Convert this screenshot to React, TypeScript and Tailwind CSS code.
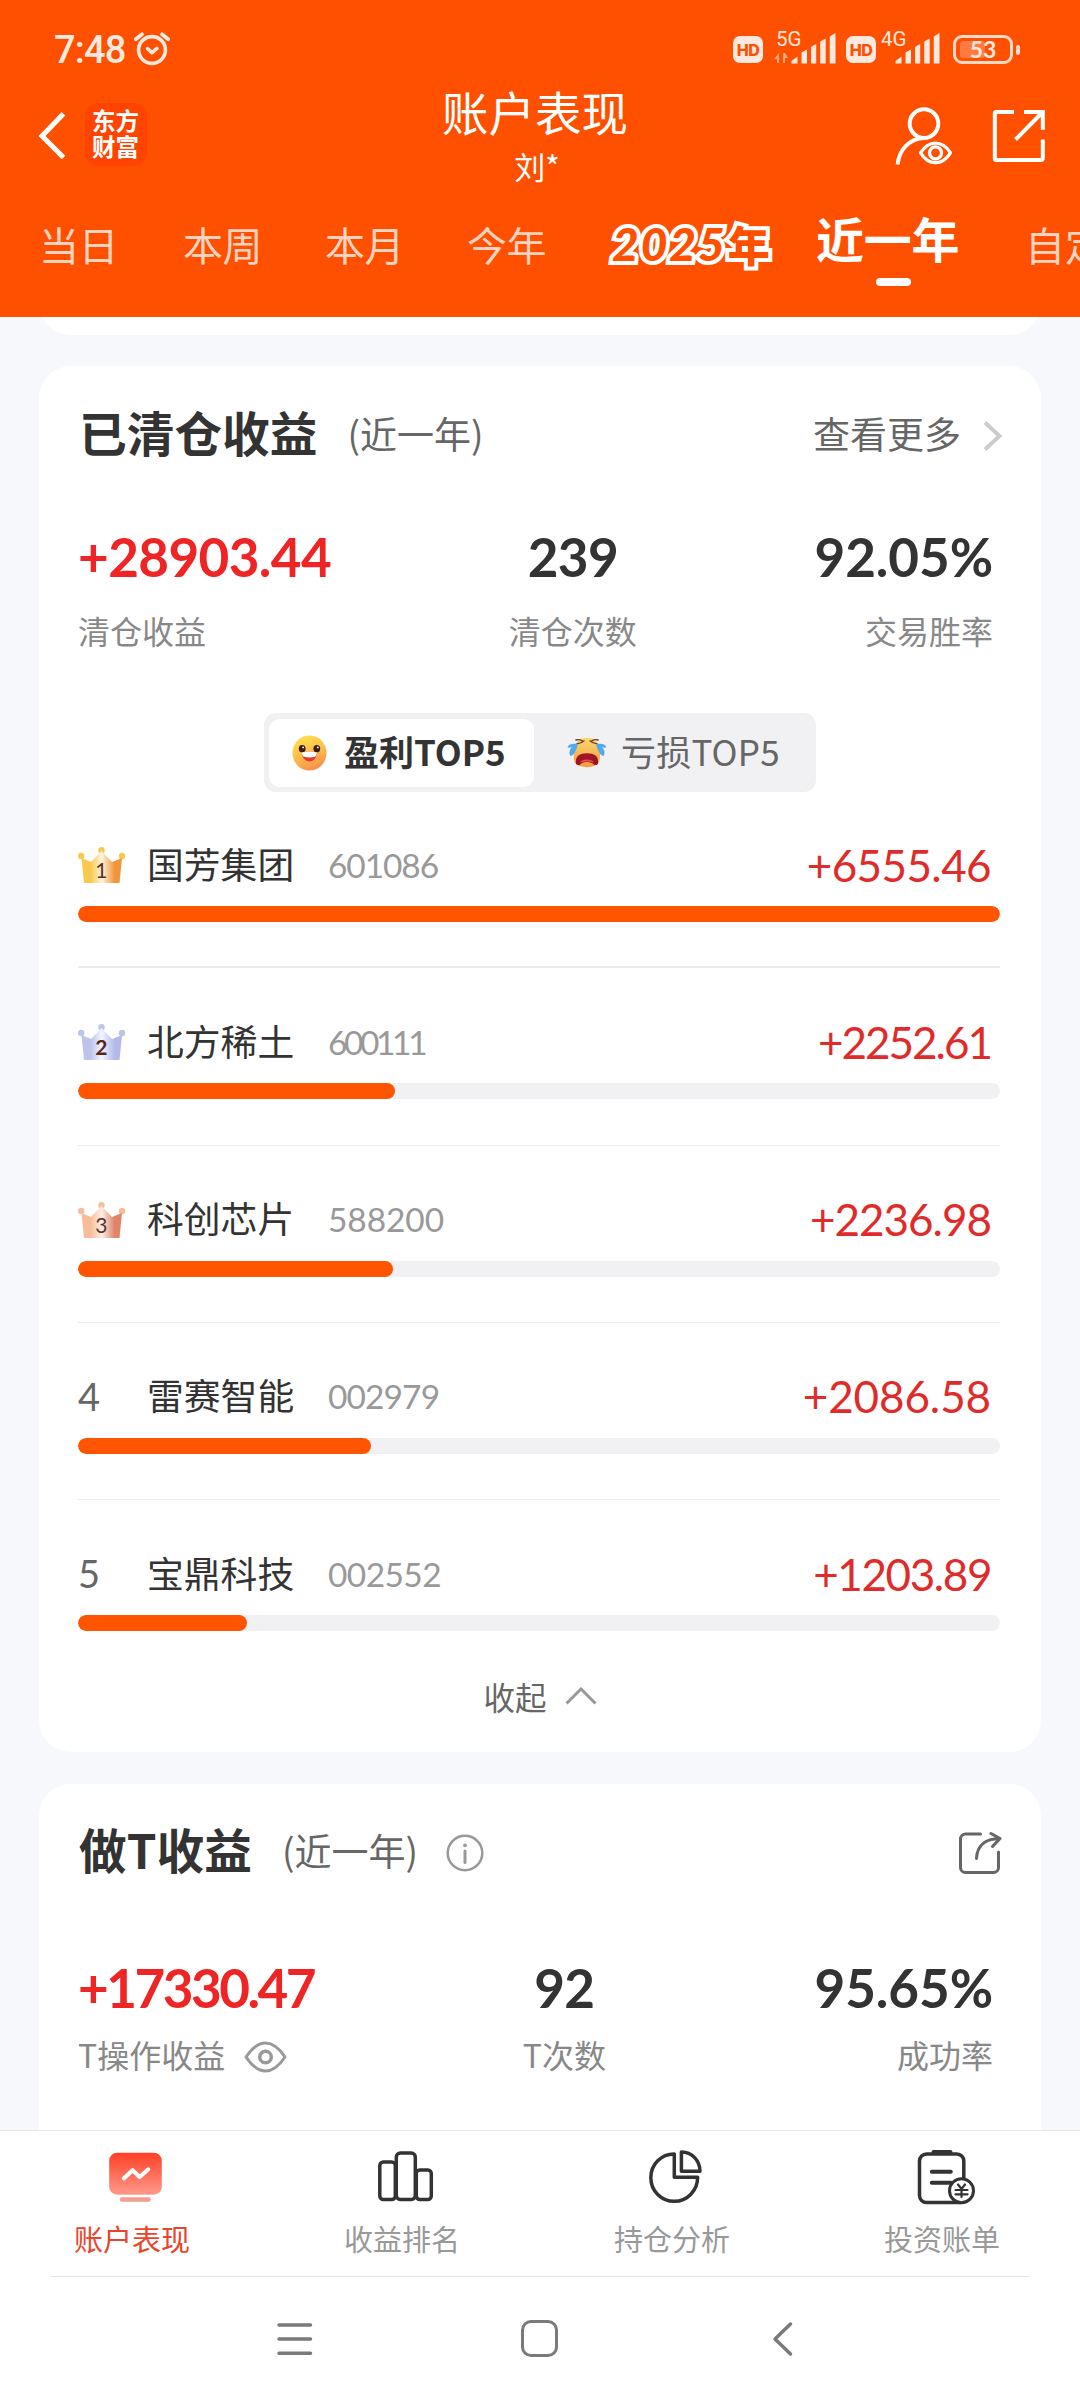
import React from 'react';
import { clsx } from 'clsx';

const NUM = "font-['Lato','Noto_Sans_CJK_SC',sans-serif]";

const TABS = [
  { label: '当日', width: 'w-[144px]' },
  { label: '本周', width: 'w-[142px]' },
  { label: '本月', width: 'w-[142px]' },
  { label: '今年', width: 'w-[138px]' },
];

const STOCKS = [
  { rank: 1, name: '国芳集团', code: '601086', codeTracking: 'tracking-[-1.1px]', profit: '+6555.46', value: 6555.46, tracking: 'tracking-[-0.6px]' },
  { rank: 2, name: '北方稀土', code: '600111', codeTracking: 'tracking-[-3.4px]', profit: '+2252.61', value: 2252.61, tracking: 'tracking-[-2px]' },
  { rank: 3, name: '科创芯片', code: '588200', codeTracking: 'tracking-[-0.1px]', profit: '+2236.98', value: 2236.98, tracking: 'tracking-[-1px]' },
  { rank: 4, name: '雷赛智能', code: '002979', codeTracking: 'tracking-[-0.9px]', profit: '+2086.58', value: 2086.58, tracking: 'tracking-[-0.1px]' },
  { rank: 5, name: '宝鼎科技', code: '002552', codeTracking: 'tracking-[-0.6px]', profit: '+1203.89', value: 1203.89, tracking: 'tracking-[-1.4px]' },
];

const CROWNS: Record<number, { from: string; mid: string; to: string; text: string; weight: number }> = {
  1: { from: '#f9c94e', mid: '#fff3dc', to: '#f2953a', text: '#5b3420', weight: 400 },
  2: { from: '#bcc4e8', mid: '#f2f4ff', to: '#b3baea', text: '#5a2418', weight: 700 },
  3: { from: '#f8bd98', mid: '#fdeee6', to: '#e08468', text: '#5b3430', weight: 400 },
};

function AlarmIcon() {
  return (
    <svg width="38" height="36" viewBox="0 0 38 36" fill="none" stroke="#ffe9de" strokeWidth="3.6" strokeLinecap="round">
      <circle cx="19" cy="19" r="13.4" />
      <path d="M2.800 8.300 9 3.200M35.200 8.300 29 3.200" strokeWidth="3.800" />
      <path d="m14.500 17.600 4.500 4 5-4.200" strokeLinejoin="round" />
    </svg>
  );
}

function HdBadge() {
  return (
    <span className="flex h-[27px] w-[30px] items-center justify-center rounded-[7px] bg-[#ffe9de] font-['Inter',sans-serif] text-[16px] font-extrabold leading-none tracking-[-0.5px] text-[#ff5000]">
      HD
    </span>
  );
}

function Signal({ arrows }: { arrows?: boolean }) {
  return (
    <svg width="62" height="36" viewBox="0 0 62 36" fill="#ffe9de">
      {arrows && <path d="M5 24v10H3v-4H0zM9 34V24h2l3 5h-3v5z" fill="#ffa67d" />}
      <path d="M17.500 34.500v-2.500l6-4.500v7zM27.500 34.500V23.500l5.500-3v14zM37 34.500V18l5.200-3v19.500zM46.200 34.500V12.500l5.500-3v25zM55.800 34.500V7.500l5.700-3.500v30.500z" />
    </svg>
  );
}

function Battery() {
  return (
    <div className="flex items-center gap-[3px]">
      <div className="relative flex h-[29px] w-[60px] items-center justify-center rounded-[9px] border-[3px] border-[#ffd9c7]">
        <div className="absolute left-[4px] top-[3px] h-[17px] w-[25px] rounded-[3px] bg-[#ff7b42]" />
        <span className={clsx(NUM, 'relative text-[23px] font-bold leading-none text-[#ffe9de]')}>53</span>
      </div>
      <div className="h-[10px] w-[4px] rounded-[2px] bg-[#ffd9c7]" />
    </div>
  );
}

function StatusBar() {
  return (
    <div className="flex h-[88px] items-start pl-[54px] pr-[60px]">
      <span className="mt-[29px] font-['Roboto',sans-serif] text-[38px] font-medium leading-[42px] tracking-[-0.8px] text-[#ffe9de]">7:48</span>
      <div className="ml-[7px] mt-[31px]"><AlarmIcon /></div>
      <div className="ml-auto mt-[35px] flex h-[29px] items-center">
        <HdBadge />
        <div className="relative ml-[11px] mt-[-5px]">
          <Signal arrows />
          <span className="absolute left-[2px] top-0 font-['Roboto',sans-serif] text-[20.5px] leading-none text-[#ffe9de]">5G</span>
        </div>
        <div className="ml-[10px]"><HdBadge /></div>
        <div className="relative ml-[2px] mt-[-5px]">
          <Signal />
          <span className="absolute left-[3px] top-0 font-['Roboto',sans-serif] text-[20.5px] leading-none text-[#ffe9de]">4G</span>
        </div>
        <div className="ml-[13px]"><Battery /></div>
      </div>
    </div>
  );
}

function TitleBar() {
  return (
    <div className="flex h-[110px] items-start justify-between pl-[38px] pr-[34px]">
      <div className="flex w-[300px] items-center pt-[15px]">
        <svg width="28" height="48" viewBox="0 0 28 48" fill="none" stroke="#fff" strokeWidth="5">
          <path d="M25.500 2.800 4 25l21.500 21.500" />
        </svg>
        <div className="ml-[19px] flex h-[63px] w-[62px] justify-center rounded-[13px] bg-[#ff4400] pt-[4px]">
          <span className="w-[48px] break-all text-[23.5px] font-bold leading-[26px] text-white">东方财富</span>
        </div>
      </div>
      <div className="flex flex-col items-center text-white">
        <span className="mt-[-3px] text-[46.5px] leading-[52px]">账户表现</span>
        <span className="mt-[4px] pl-[4px] text-[31px] leading-[50px]">刘*</span>
      </div>
      <div className="flex w-[314px] justify-end gap-[36px] pt-[18px]">
        <svg width="60" height="60" viewBox="0 0 60 60" fill="none" stroke="#fff" strokeWidth="4">
          <circle cx="30" cy="17.600" r="14.300" />
          <path d="M3.700 58.500C5 43 16 32.500 30 31.900" />
          <path d="M26.500 46.800c8-13 22-13 30 0-8 13-22 13-30 0z" strokeWidth="3.300" strokeLinejoin="round" />
          <circle cx="41.500" cy="46.800" r="6" strokeWidth="3.300" />
        </svg>
        <svg width="56" height="60" viewBox="0 0 56 60" fill="none" stroke="#fff" strokeWidth="4">
          <path d="M24 6H6.300a1.500 1.500 0 0 0-1.500 1.500v45a1.500 1.500 0 0 0 1.500 1.500h45a1.500 1.500 0 0 0 1.500-1.500V33.500" />
          <path d="M34 6h18.800v17.700M52.800 6 25.500 33.500" />
        </svg>
      </div>
    </div>
  );
}

function PeriodTabs() {
  return (
    <div className="flex h-[119px] items-start overflow-hidden whitespace-nowrap pl-[39px] text-[40px] leading-[56px] text-[#ffd3bf]">
      {TABS.map((t) => (
        <span key={t.label} className={clsx('mt-[18px] shrink-0 tracking-[-0.5px]', t.width)}>{t.label}</span>
      ))}
      <span className="mt-[18px] flex w-[211px] shrink-0 pl-[7px] font-black text-[#ff5000] [-webkit-text-stroke:8px_white] [paint-order:stroke_fill] [stroke-linejoin:round]">
        <span className="font-['Lato',sans-serif] text-[46px] italic tracking-[2px]">2025</span>
        <span className="ml-[1px] text-[42px]">年</span>
      </span>
      <div className="mt-[11px] flex w-[209px] shrink-0 flex-col">
        <span className="text-[48px] font-bold leading-[56px] tracking-[-0.3px] text-white">近一年</span>
        <span className="ml-[60px] mt-[13px] h-2 w-[35px] rounded-full bg-white" />
      </div>
      <span className="mt-[18px] shrink-0">自定义</span>
    </div>
  );
}

function Card({ className, children }: { className?: string; children: React.ReactNode }) {
  return <section className={clsx('mx-[39px] overflow-hidden rounded-[32px] bg-white', className)}>{children}</section>;
}

interface StatProps {
  value: string;
  label: string;
  align: string;
  tracking?: string;
  red?: boolean;
  extra?: React.ReactNode;
}

function Stat({ value, label, align, tracking = 'tracking-[-0.6px]', red, extra }: StatProps) {
  return (
    <div className={clsx('flex flex-col', align)}>
      <span className={clsx(NUM, 'text-[53px] font-bold leading-[60px]', tracking, red ? 'text-[#ef2424]' : 'text-[#333]')}>{value}</span>
      <span className="flex items-center text-[32px] leading-[48px] text-[#888]">{label}{extra}</span>
    </div>
  );
}

function GrinFace() {
  return (
    <svg width="35" height="36" viewBox="0 0 36 42" preserveAspectRatio="none">
      <defs>
        <linearGradient id="grin" x1="0.3" y1="0" x2="0.7" y2="1">
          <stop offset="0" stopColor="#ffe14d" />
          <stop offset="0.55" stopColor="#fdb94a" />
          <stop offset="1" stopColor="#f58a4e" />
        </linearGradient>
      </defs>
      <ellipse cx="18" cy="21" rx="17.500" ry="20.500" fill="url(#grin)" />
      <ellipse cx="10.500" cy="16" rx="3.500" ry="4.200" fill="#3a1c14" />
      <ellipse cx="25.500" cy="16" rx="3.500" ry="4.200" fill="#3a1c14" />
      <circle cx="11.500" cy="14.500" r="1" fill="#fff" />
      <circle cx="26.500" cy="14.500" r="1" fill="#fff" />
      <path d="M10 20.500c5-1.500 11-1.500 15.500 0 0 6-3.500 10.500-7.500 10.500s-8-4.500-8-10.500z" fill="#e8352f" />
      <path d="M10 20.500c5-1.500 11-1.500 15.500 0 0 2.500-1.200 4.300-2 5-4 1-7.500 1-11.500 0-1-1-2-2.500-2-5z" fill="#fff" />
    </svg>
  );
}

function CryFace() {
  return (
    <svg width="40" height="31" viewBox="0 0 40 36" preserveAspectRatio="none">
      <defs>
        <linearGradient id="cry" x1="0" y1="0" x2="0" y2="1">
          <stop offset="0" stopColor="#fcd873" />
          <stop offset="1" stopColor="#f5993f" />
        </linearGradient>
      </defs>
      <path d="M20 1c7 0 12 5 12.500 13 1 6 1 12-1 16-3 4-7 5-11.500 5S11 34 8 30c-2-4-1.500-10-.5-16C8 6 13 1 20 1z" fill="url(#cry)" />
      <path d="M9 3.500c3-1 6 0 6.500 1.500M10 8c3-.5 5-1.500 7-3.500M31 3.500c-3-1-6 0-6.500 1.500M30 8c-3-.5-5-1.500-7-3.500" fill="none" stroke="#6b3d22" strokeWidth="1.600" strokeLinecap="round" />
      <path d="M9 31c-1-8 3-12 11-12s12 4 11 12c-1 2-4 2-5 0-3-2.500-9-2.500-12 0-1 2-4 2-5 0z" fill="#a01525" />
      <path d="M13 30c2-5 12-5 14 0-3-2-11-2-14 0z" fill="#ee4a55" />
      <path d="M11 8C5 7 1 9 .5 12c2 1 4 0 5-1-3 3-4 8-2 11 4-1 6-8 7.500-14zM29 8c6-1 10 1 10.500 4-2 1-4 0-5-1 3 3 4 8 2 11-4-1-6-8-7.500-14z" fill="#4fa9ee" />
    </svg>
  );
}

function Crown({ rank }: { rank: number }) {
  const c = CROWNS[rank];
  const id = `crown${rank}`;
  return (
    <svg className="mt-[1px]" width="48" height="38" viewBox="0 0 48 38">
      <defs>
        <linearGradient id={id} x1="0" y1="0" x2="1" y2="0">
          <stop offset="0" stopColor={c.from} />
          <stop offset="0.22" stopColor={c.from} />
          <stop offset="0.5" stopColor={c.mid} />
          <stop offset="0.82" stopColor={c.to} />
          <stop offset="1" stopColor={c.to} />
        </linearGradient>
      </defs>
      <g fill={c.from}>
        <circle cx="3.200" cy="10" r="3.200" />
        <circle cx="23.500" cy="4.300" r="3.200" />
        <circle cx="44" cy="10" r="3.200" />
      </g>
      <path d="M3.500 12 13 16 23.500 5 34 16l10-4-2.500 25H6z" fill={`url(#${id})`} />
      <text x="23.300" y="31.500" textAnchor="middle" fontSize="21" fontWeight={c.weight} fill={c.text} fontFamily="Lato, sans-serif">{rank}</text>
    </svg>
  );
}

function StockRow({ stock, last }: { stock: (typeof STOCKS)[number]; last?: boolean }) {
  return (
    <div className={clsx('h-[177.25px] pt-[49px]', !last && 'border-b border-[#ececee]', stock.rank === 1 && 'border-b-2')}>
      <div className="flex h-[49px] items-center">
        <div className="w-[69px]">
          {stock.rank <= 3 ? <Crown rank={stock.rank} /> : <span className={clsx(NUM, 'text-[38px] leading-[49px] text-[#666]')}>{stock.rank}</span>}
        </div>
        <span className="w-[181px] pb-[3px] text-[36.8px] leading-[49px] text-[#333]">{stock.name}</span>
        <span className={clsx(NUM, 'pt-[1px] text-[33.5px] leading-[49px] text-[#999]', stock.codeTracking)}>{stock.code}</span>
        <span className={clsx(NUM, 'ml-auto mr-[9px] pt-[1px] text-[44px] leading-[49px] text-[#e02b2b]', stock.tracking)}>{stock.profit}</span>
      </div>
      <div className="mt-[17px] h-4 overflow-hidden rounded-full bg-[#f1f1f4]">
        <div className="h-full rounded-full bg-[#ff5500]" style={{ width: `${(stock.value / STOCKS[0].value) * 100}%` }} />
      </div>
    </div>
  );
}

function ClearedCard() {
  return (
    <Card className="mt-[31px] h-[1386px]">
      <div className="mt-[35px] flex h-[70px] items-center pl-[40px] pr-[38px]">
        <h2 className="pb-[8px] text-[47.7px] font-bold leading-[70px] text-[#333]">已清仓收益</h2>
        <span className="ml-[30px] pb-[6px] text-[37px] leading-[70px] text-[#666]">(近一年)</span>
        <span className="ml-auto pb-[6px] text-[37px] leading-[70px] text-[#666]">查看更多</span>
        <svg className="ml-[22px]" width="20" height="34" viewBox="0 0 20 34" fill="none" stroke="#ccc" strokeWidth="4">
          <path d="M2 3.500 16.500 17 2 30.500" />
        </svg>
      </div>
      <div className="mt-[56px] flex justify-between pl-[39px] pr-[48px]">
        <Stat value="+28903.44" label="清仓收益" align="items-start gap-[19px]" red />
        <Stat value="239" label="清仓次数" align="items-center gap-[19px]" />
        <Stat value="92.05%" label="交易胜率" align="items-end gap-[19px]" tracking="tracking-[-0.1px]" />
      </div>
      <div className="mx-auto mt-[59px] flex h-[79px] w-[552px] items-center rounded-[12px] bg-[#f1f1f4] p-[5px]">
        <div className="flex h-[68px] w-[265px] items-center rounded-[11px] bg-white pl-[23px] text-[35px] font-bold leading-[60px] text-[#333]">
          <GrinFace />
          <span className="ml-[17px] pb-[4px]">盈利TOP5</span>
        </div>
        <div className="flex items-center pl-[33px] text-[35px] leading-[60px] text-[#666]">
          <CryFace />
          <span className="ml-[14px] pb-[4px] tracking-[0.2px]">亏损TOP5</span>
        </div>
      </div>
      <div className="ml-[39px] mr-[41px] mt-[-1px]">
        {STOCKS.map((s, i) => <StockRow key={s.rank} stock={s} last={i === STOCKS.length - 1} />)}
      </div>
      <div className="flex h-[38px] items-center justify-center text-[31.5px] leading-[38px] text-[#666]">
        收起
        <svg className="ml-[18px]" width="32" height="18" viewBox="0 0 32 18" fill="none" stroke="#999" strokeWidth="3">
          <path d="M1.500 16.500 16 2l14.500 14.500" />
        </svg>
      </div>
    </Card>
  );
}

function EyeIcon() {
  return (
    <svg className="ml-[19px] mt-[5px]" width="43" height="32" viewBox="0 0 43 32" fill="none" stroke="#999" strokeWidth="3">
      <path d="M2 16C8 7 14 2 21.500 2S35 7 41 16c-6 9-12 14-19.500 14S8 25 2 16z" strokeLinejoin="round" />
      <circle cx="21.500" cy="16" r="5.800" strokeWidth="3.500" />
    </svg>
  );
}

function TTradeCard() {
  return (
    <Card className="mt-[32px] h-[400px]">
      <div className="mt-[34px] flex h-[70px] items-center pl-[40px] pr-[39px]">
        <h2 className="pb-[8px] text-[47.7px] font-bold leading-[70px] text-[#333]">做T收益</h2>
        <span className="ml-[30px] pb-[6px] text-[37px] leading-[70px] text-[#666]">(近一年)</span>
        <svg className="ml-[28px]" width="38" height="38" viewBox="0 0 38 38" fill="none" stroke="#999" strokeWidth="2.500">
          <circle cx="19" cy="19" r="17.300" />
          <path d="M19 17v11.500" strokeWidth="3" strokeLinecap="round" />
          <circle cx="19" cy="11.300" r="1.900" fill="#999" stroke="none" />
        </svg>
        <svg className="ml-auto" width="44" height="46" viewBox="0 0 44 46" fill="none" stroke="#666" strokeWidth="3" strokeLinecap="round" strokeLinejoin="round">
          <path d="M22.500 4H7.500a5 5 0 0 0-5 5v28.500a5 5 0 0 0 5 5h28a5 5 0 0 0 5-5V22" />
          <path d="M18.500 28.500C19 16 27 8.800 41.500 8.500M33 3.500l9 5-7.500 8" />
        </svg>
      </div>
      <div className="mt-[70px] flex justify-between pl-[39px] pr-[48px]">
        <Stat value="+17330.47" label="T操作收益" align="items-start gap-[12px]" tracking="tracking-[-2.5px]" red extra={<EyeIcon />} />
        <Stat value="92" label="T次数" align="items-center gap-[12px]" />
        <Stat value="95.65%" label="成功率" align="items-end gap-[12px]" tracking="tracking-[-0.1px]" />
      </div>
    </Card>
  );
}

function PerformanceIcon() {
  return (
    <svg width="60" height="60" viewBox="0 0 60 60" fill="none">
      <defs>
        <linearGradient id="perf" x1="0" y1="0" x2="0" y2="1">
          <stop offset="0" stopColor="#ff3f25" />
          <stop offset="1" stopColor="#ff9a8b" />
        </linearGradient>
      </defs>
      <rect x="4.200" y="3.700" width="52.600" height="42" rx="8" fill="url(#perf)" />
      <path d="m18.800 29.500 8.800-8.300 7 6.800 8.700-7.700" stroke="#fff" strokeWidth="4" strokeLinecap="round" strokeLinejoin="round" />
      <rect x="14.800" y="48.300" width="31" height="4.500" rx="2" fill="#f79c90" />
    </svg>
  );
}

function RankingIcon() {
  return (
    <svg width="60" height="60" viewBox="0 0 60 60" fill="none" stroke="#333" strokeWidth="3.500">
      <rect x="4.800" y="13" width="15.500" height="37.500" rx="3.500" />
      <rect x="21.300" y="4" width="19" height="46.500" rx="4" />
      <rect x="41.300" y="21" width="15" height="29.500" rx="3.500" />
    </svg>
  );
}

function HoldingIcon() {
  return (
    <svg width="60" height="60" viewBox="0 0 60 60" fill="none" stroke="#333" strokeWidth="3.500" strokeLinejoin="round">
      <path d="M29.300 4.900A23.400 23.700 0 1 0 52.600 28.300H29.300z" />
      <path d="M36.400 3V22.300H55C55 11.500 47 3 36.400 3z" />
    </svg>
  );
}

function BillIcon() {
  return (
    <svg width="60" height="60" viewBox="0 0 60 60" fill="none" stroke="#333" strokeWidth="3.500" strokeLinecap="round">
      <path d="M48.800 30V12a7 7 0 0 0-7-7H11.500a7 7 0 0 0-7 7v34.500a7 7 0 0 0 7 7h34" />
      <path d="M18.500 3h17" strokeWidth="4" />
      <path d="M16.800 22.700h19M16.800 33.700h19" strokeWidth="4" />
      <circle cx="46.500" cy="41.700" r="12" fill="#fff" strokeWidth="3" />
      <path d="m43 35.500 3.500 4.500 3.500-4.500M46.500 40v8M40.500 41h12M40.500 45.300h12" strokeWidth="2.200" />
    </svg>
  );
}

const NAV = [
  { label: '账户表现', icon: <PerformanceIcon />, active: true },
  { label: '收益排名', icon: <RankingIcon /> },
  { label: '持仓分析', icon: <HoldingIcon /> },
  { label: '投资账单', icon: <BillIcon /> },
];

function BottomNav() {
  return (
    <nav className="shrink-0 border-t border-[#e9eaec] bg-white">
      <div className="grid h-[145px] grid-cols-4">
        {NAV.map((n) => (
          <div key={n.label} className="flex flex-col items-center pt-[18px]">
            {n.icon}
            <span className={clsx('mt-[8px] pr-[6px] text-[29px] leading-[42px]', n.active ? 'text-[#e8452c]' : 'text-[#999]')}>{n.label}</span>
          </div>
        ))}
      </div>
      <div className="mx-[51px] h-px bg-[#e4e4e4]" />
    </nav>
  );
}

function SystemNav() {
  return (
    <div className="flex h-[123px] shrink-0 items-center justify-between bg-white pl-[276px] pr-[286px]">
      <svg width="37" height="38" viewBox="0 0 37 38" stroke="#7a7a7a" strokeWidth="3.500" strokeLinecap="round">
        <path d="M3 5h31.500M3 19h31.500M3 33.200h31.500" />
      </svg>
      <div className="ml-[-7px] size-[37px] rounded-[10px] border-[3.5px] border-[#7a7a7a]" />
      <svg width="22" height="38" viewBox="0 0 22 38" fill="none" stroke="#7a7a7a" strokeWidth="3.500" strokeLinecap="round" strokeLinejoin="round">
        <path d="M18.500 4 3 19l15.500 15" />
      </svg>
    </div>
  );
}

export default function App() {
  return (
    <div className="flex h-[2400px] w-[1080px] flex-col overflow-hidden bg-[#f7f8fb] font-['Noto_Sans_CJK_SC',sans-serif]">
      <header className="h-[317px] shrink-0 bg-[#ff5000]">
        <StatusBar />
        <TitleBar />
        <PeriodTabs />
      </header>
      <main className="h-[1813px] shrink-0 overflow-hidden">
        {/* bottom edge of the card scrolled under the header */}
        <div className="h-[18px] overflow-hidden">
          <div className="mx-[39px] mt-[-60px] h-[78px] rounded-[32px] bg-white" />
        </div>
        <ClearedCard />
        <TTradeCard />
      </main>
      <BottomNav />
      <SystemNav />
    </div>
  );
}
